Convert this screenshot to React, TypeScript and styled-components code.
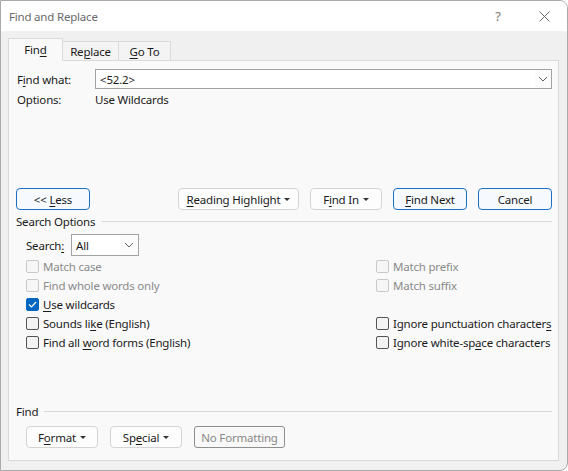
import React from 'react'
import styled, { createGlobalStyle, css } from 'styled-components'

const GlobalStyle = createGlobalStyle`
  html, body {
    margin: 0;
    padding: 0;
    background: #ffffff;
  }
  body {
    font-family: 'Noto Sans', 'Segoe UI', sans-serif;
    font-size: 11.5px;
    letter-spacing: -0.2px;
    color: #1a1a1a;
  }
  u {
    text-decoration-thickness: 1px;
    text-underline-offset: 2px;
  }
`

const Window = styled.div`
  width: 568px;
  height: 471px;
  box-sizing: border-box;
  border: 1px solid #aaaaaa;
  border-radius: 0 8px 8px 0;
  background: #f0f0f0;
  display: flex;
  flex-direction: column;
  overflow: hidden;
`

const TitleBar = styled.div`
  height: 30px;
  background: #ffffff;
  display: flex;
  align-items: center;
  padding-left: 8px;
  flex-shrink: 0;
`

const Title = styled.div`
  flex: 1;
  font-size: 11.5px;
  color: #6a6a6a;
`

const TitleButton = styled.div<{ $width: number }>`
  width: ${(p) => p.$width}px;
  height: 30px;
  display: flex;
  align-items: center;
  justify-content: center;
  color: #7a7a7a;
  font-size: 13px;
`

const Body = styled.div`
  flex: 1;
  display: flex;
  flex-direction: column;
  padding: 6px 8px 9px 7px;
`

const TabStrip = styled.div`
  display: flex;
  align-items: flex-end;
  height: 23px;
`

const Tab = styled.div<{ $active?: boolean; $width: number }>`
  position: relative;
  width: ${(p) => p.$width}px;
  box-sizing: border-box;
  display: flex;
  align-items: center;
  justify-content: center;
  border: 1px solid #dadada;
  border-bottom: none;
  ${(p) =>
    p.$active
      ? css`
          height: 23px;
          margin-bottom: -1px;
          background: #f9f9f9;
          z-index: 1;
          padding-bottom: 2px;
        `
      : css`
          height: 19px;
          background: #f4f4f4;
          border-left: none;
        `}
`

const Panel = styled.div`
  flex: 1;
  border: 1px solid #dadada;
  background: #f9f9f9;
  display: flex;
  flex-direction: column;
  padding: 0 6px 0 7px;
`

const FieldRow = styled.div<{ $top: number }>`
  display: flex;
  align-items: center;
  margin-top: ${(p) => p.$top}px;
  padding-left: 1px;
  min-height: 16px;
`

const FieldLabel = styled.div`
  width: 78px;
  flex-shrink: 0;
`

const ComboInput = styled.div`
  flex: 1;
  height: 20px;
  box-sizing: border-box;
  border: 1px solid #a2a2a2;
  background: #ffffff;
  display: flex;
  align-items: center;
`

const ComboText = styled.div`
  flex: 1;
  padding-left: 4px;
`

const ComboArrow = styled.div<{ $width: number }>`
  width: ${(p) => p.$width}px;
  align-self: stretch;
  display: flex;
  align-items: center;
  justify-content: center;
  background: #fbfbfb;
`

const ButtonRow = styled.div<{ $top: number }>`
  display: flex;
  align-items: center;
  margin-top: ${(p) => p.$top}px;
`

const ButtonGroup = styled.div<{ $gap: number; $indent?: number }>`
  display: flex;
  gap: ${(p) => p.$gap}px;
  margin-left: ${(p) => (p.$indent === undefined ? 'auto' : `${p.$indent}px`)};
`

const Button = styled.div<{ $width: number; $variant?: 'primary' | 'plain' | 'disabled' }>`
  width: ${(p) => p.$width}px;
  height: 22px;
  box-sizing: border-box;
  border-radius: 4px;
  display: flex;
  align-items: center;
  justify-content: center;
  gap: 4px;
  white-space: nowrap;
  ${(p) =>
    p.$variant === 'primary'
      ? css`
          border: 1px solid #1a6fc2;
          background: #f6f9fd;
        `
      : p.$variant === 'disabled'
        ? css`
            border: 1px solid #8e8e8e;
            background: #f8f8f8;
            color: #888888;
            border-radius: 3px;
          `
        : css`
            border: 1px solid #d4d4d4;
            background: #fdfdfd;
          `}
`

const Caret = styled.span`
  width: 0;
  height: 0;
  border-left: 3px solid transparent;
  border-right: 3px solid transparent;
  border-top: 3px solid #333333;
  margin-top: 1px;
`

const SectionHeader = styled.div<{ $top: number }>`
  display: flex;
  align-items: center;
  gap: 6px;
  margin-top: ${(p) => p.$top}px;
  height: 16px;
  &::after {
    content: '';
    flex: 1;
    height: 1px;
    background: #d9d9d9;
  }
`

const SearchRow = styled.div`
  display: flex;
  align-items: center;
  margin-top: 5px;
  padding-left: 10px;
`

const SearchLabel = styled.div`
  width: 45px;
`

const SelectBox = styled(ComboInput)`
  flex: none;
  width: 68px;
  height: 22px;
`

const OptionsGrid = styled.div`
  display: grid;
  grid-template-columns: 350px 1fr;
  grid-auto-rows: 19px;
  margin-top: 1px;
  padding-left: 10px;
`

const Check = styled.label<{ $disabled?: boolean }>`
  display: flex;
  align-items: center;
  gap: 4px;
  white-space: nowrap;
  color: ${(p) => (p.$disabled ? '#8a8a8a' : '#1a1a1a')};
`

const Box = styled.span<{ $checked?: boolean; $disabled?: boolean }>`
  width: 13px;
  height: 13px;
  flex-shrink: 0;
  box-sizing: border-box;
  border-radius: 2px;
  display: flex;
  align-items: center;
  justify-content: center;
  border: 1px solid ${(p) => (p.$checked ? '#0067c0' : p.$disabled ? '#c9c9c9' : '#555555')};
  background: ${(p) => (p.$checked ? '#0067c0' : p.$disabled ? '#f6f6f6' : '#f3f3f3')};
`

const Chevron = () => (
  <svg width="10" height="6" viewBox="0 0 10 6">
    <polyline points="1,1 5,5 9,1" fill="none" stroke="#606060" strokeWidth="1" />
  </svg>
)

const CloseIcon = () => (
  <svg width="11" height="11" viewBox="0 0 11 11">
    <path d="M0.5 0.5 L10.5 10.5 M10.5 0.5 L0.5 10.5" stroke="#6a6a6a" strokeWidth="1" />
  </svg>
)

const CheckMark = () => (
  <svg width="9" height="7" viewBox="0 0 9 7">
    <polyline points="1,3.5 3.5,6 8,1" fill="none" stroke="#ffffff" strokeWidth="1.2" />
  </svg>
)

type OptionProps = {
  children?: React.ReactNode
  checked?: boolean
  disabled?: boolean
}

const Option = ({ children, checked, disabled }: OptionProps) =>
  children ? (
    <Check $disabled={disabled}>
      <Box $checked={checked} $disabled={disabled}>
        {checked && <CheckMark />}
      </Box>
      <span>{children}</span>
    </Check>
  ) : (
    <span />
  )

const App = () => (
  <>
    <GlobalStyle />
    <Window>
      <TitleBar>
        <Title>Find and Replace</Title>
        <TitleButton $width={46}>?</TitleButton>
        <TitleButton $width={46}>
          <CloseIcon />
        </TitleButton>
      </TitleBar>
      <Body>
        <TabStrip>
          <Tab $active $width={55}>
            <span>
              Fin<u>d</u>
            </span>
          </Tab>
          <Tab $width={56}>
            <span>
              Re<u>p</u>lace
            </span>
          </Tab>
          <Tab $width={52}>
            <span>
              <u>G</u>o To
            </span>
          </Tab>
        </TabStrip>
        <Panel>
          <FieldRow $top={8}>
            <FieldLabel>
              F<u>i</u>nd what:
            </FieldLabel>
            <ComboInput>
              <ComboText>&lt;52.2&gt;</ComboText>
              <ComboArrow $width={16}>
                <Chevron />
              </ComboArrow>
            </ComboInput>
          </FieldRow>
          <FieldRow $top={2}>
            <FieldLabel>Options:</FieldLabel>
            <div>Use Wildcards</div>
          </FieldRow>

          <ButtonRow $top={81}>
            <Button $width={74} $variant="primary">
              <span>
                &lt;&lt; <u>L</u>ess
              </span>
            </Button>
            <ButtonGroup $gap={11}>
              <Button $width={121}>
                <span>
                  <u>R</u>eading Highlight
                </span>
                <Caret />
              </Button>
              <Button $width={72}>
                <span>
                  F<u>i</u>nd In
                </span>
                <Caret />
              </Button>
              <Button $width={74} $variant="primary">
                <span>
                  <u>F</u>ind Next
                </span>
              </Button>
              <Button $width={74} $variant="primary">
                <span>Cancel</span>
              </Button>
            </ButtonGroup>
          </ButtonRow>

          <SectionHeader $top={3}>Search Options</SectionHeader>
          <SearchRow>
            <SearchLabel>
              Search<u>:</u>
            </SearchLabel>
            <SelectBox>
              <ComboText>All</ComboText>
              <ComboArrow $width={18}>
                <Chevron />
              </ComboArrow>
            </SelectBox>
          </SearchRow>
          <OptionsGrid>
            <Option disabled>Match case</Option>
            <Option disabled>Match prefix</Option>
            <Option disabled>Find whole words only</Option>
            <Option disabled>Match suffix</Option>
            <Option checked>
              <u>U</u>se wildcards
            </Option>
            <Option />
            <Option>
              Sounds li<u>k</u>e (English)
            </Option>
            <Option>
              Ignore punctuation character<u>s</u>
            </Option>
            <Option>
              Find all <u>w</u>ord forms (English)
            </Option>
            <Option>
              Ignore white-sp<u>a</u>ce characters
            </Option>
          </OptionsGrid>

          <SectionHeader $top={51}>Find</SectionHeader>
          <ButtonRow $top={7}>
            <ButtonGroup $gap={12} $indent={10}>
              <Button $width={72}>
                <span>
                  F<u>o</u>rmat
                </span>
                <Caret />
              </Button>
              <Button $width={72}>
                <span>
                  Sp<u>e</u>cial
                </span>
                <Caret />
              </Button>
              <Button $width={91} $variant="disabled">
                <span>No Formatting</span>
              </Button>
            </ButtonGroup>
          </ButtonRow>
        </Panel>
      </Body>
    </Window>
  </>
)

export default App
